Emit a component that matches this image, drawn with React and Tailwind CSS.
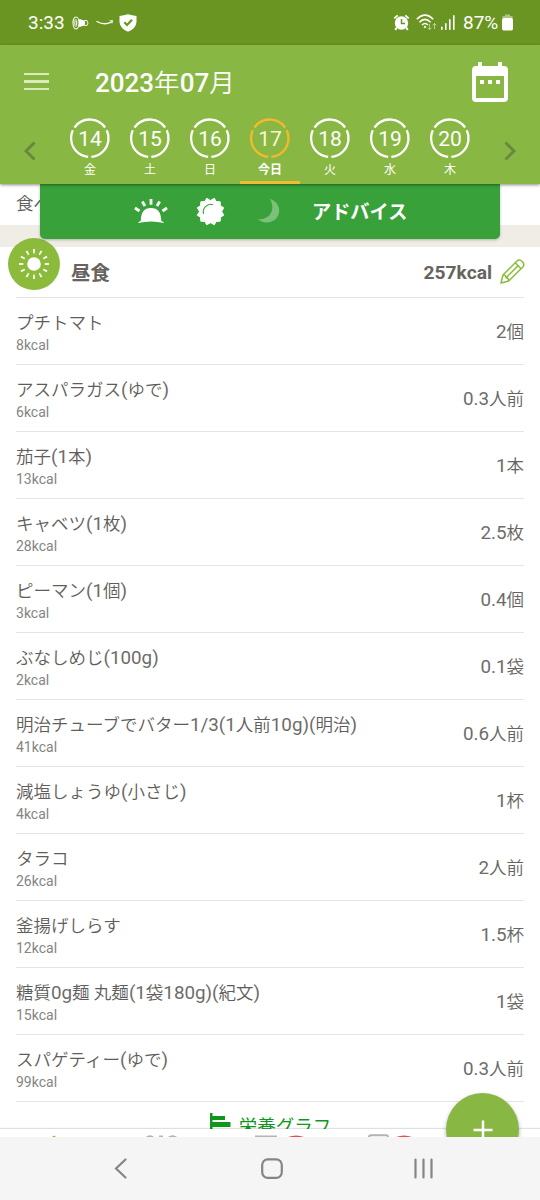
const DAYS = [
  { date: 14, day: '金' },
  { date: 15, day: '土' },
  { date: 16, day: '日' },
  { date: 17, day: '今日', today: true },
  { date: 18, day: '火' },
  { date: 19, day: '水' },
  { date: 20, day: '木' },
]

const FOODS = [
  { name: 'プチトマト', kcal: 8, amount: '2個' },
  { name: 'アスパラガス(ゆで)', kcal: 6, amount: '0.3人前' },
  { name: '茄子(1本)', kcal: 13, amount: '1本' },
  { name: 'キャベツ(1枚)', kcal: 28, amount: '2.5枚' },
  { name: 'ピーマン(1個)', kcal: 3, amount: '0.4個' },
  { name: 'ぶなしめじ(100g)', kcal: 2, amount: '0.1袋' },
  { name: '明治チューブでバター1/3(1人前10g)(明治)', kcal: 41, amount: '0.6人前' },
  { name: '減塩しょうゆ(小さじ)', kcal: 4, amount: '1杯' },
  { name: 'タラコ', kcal: 26, amount: '2人前' },
  { name: '釜揚げしらす', kcal: 12, amount: '1.5杯' },
  { name: '糖質0g麺 丸麺(1袋180g)(紀文)', kcal: 15, amount: '1袋' },
  { name: 'スパゲティー(ゆで)', kcal: 99, amount: '0.3人前' },
]

function StatusBar() {
  return (
    <div className="h-[45px] shrink-0 bg-[#6a9522] flex items-center pl-7 pr-[27px] text-white text-[19px] leading-none">
      <span className="w-[37px]">3:33</span>
      <svg className="ml-[7px]" width="18" height="14" viewBox="0 0 18 14" fill="none" stroke="white">
        <ellipse cx="4" cy="7" rx="3" ry="6" strokeWidth="1.1" />
        <ellipse cx="3.8" cy="7" rx="1" ry="3.5" strokeWidth="1" />
        <path d="M7.5 3.5L12 5V9L7.5 10.5z" fill="white" strokeWidth="1" />
        <path d="M12.5 4.5H15Q17 7 15 9.5H12.5z" strokeWidth="0.9" />
      </svg>
      <svg className="ml-[6px]" width="18" height="8" viewBox="0 0 18 8" fill="none" stroke="white" strokeLinecap="round">
        <path d="M1 2.5Q8 6.8 15.5 3" strokeWidth="1.4" />
        <path d="M14 1.8L16.5 1.5L16 4" strokeWidth="0.9" />
      </svg>
      <svg className="ml-[5px]" width="18" height="18" viewBox="0 0 18 18">
        <path d="M0.5 2Q5 1.5 9 0.3Q13 1.5 17.5 2V8Q17 14.5 9 17.8Q1 14.5 0.5 8z" fill="white" />
        <path d="M5.3 8.3L8 11L13 5.7" fill="none" stroke="#6a9522" strokeWidth="2.2" />
      </svg>

      <svg className="ml-auto" width="17" height="17" viewBox="0 0 17 17">
        <circle cx="8.5" cy="9" r="6.7" fill="white" />
        <path d="M1.3 4.4L4.7 1.4M15.7 4.4L12.3 1.4M3.7 13.5L2.3 16M13.3 13.5L14.7 16" stroke="white" strokeWidth="1.9" />
        <path d="M8.5 5V9.5H12" fill="none" stroke="#6a9522" strokeWidth="1.5" />
      </svg>
      <svg className="ml-[6px]" width="21" height="17" viewBox="0 0 21 17" fill="none" stroke="white" strokeWidth="1.6">
        <path d="M0.8 5.3Q9 -3 17.2 5.3M3.4 8.2Q9 2.5 14.6 8.2M6 11Q9 8 12 11" />
        <circle cx="9" cy="13" r="0.8" fill="white" strokeWidth="0.8" />
        <path d="M13.6 10V15.5M11.8 13.8L13.6 15.6L15.4 13.8M18.5 15V9.5M16.7 11.3L18.5 9.5L20.3 11.3" strokeWidth="1" opacity="0.55" />
      </svg>
      <svg className="ml-[4px]" width="14" height="15" viewBox="0 0 14 15" fill="white">
        <rect x="0" y="11.5" width="1.6" height="3.5" rx="0.8" />
        <rect x="4" y="8" width="1.6" height="7" rx="0.8" />
        <rect x="8" y="4" width="1.6" height="11" rx="0.8" />
        <rect x="12" y="0" width="1.6" height="15" rx="0.8" />
      </svg>
      <span className="ml-[8px] w-[37px]">87%</span>
      <svg className="ml-[2px]" width="11" height="17" viewBox="0 0 11 17">
        <path d="M3 0.5H8V2H9.5Q11 2 11 4H0Q0 2 1.5 2H3z" fill="white" opacity="0.45" />
        <rect y="4" width="11" height="12.5" rx="1.7" fill="white" />
      </svg>
    </div>
  )
}

function DayRing({ date, today }) {
  return (
    <div className="grid place-items-center">
      <svg className="col-start-1 row-start-1" width="42" height="42" viewBox="0 0 42 42" fill="none">
        <circle
          cx="20.8"
          cy="21.2"
          r="18.7"
          stroke={today ? '#f6b92c' : 'white'}
          strokeWidth="2.3"
          pathLength="360"
          strokeDasharray="110 10"
          transform="rotate(95 20.8 21.2)"
        />
      </svg>
      <span className={`col-start-1 row-start-1 pt-[2px] text-[21px] leading-none ${today ? 'text-[#fff3d2]' : 'text-white'}`}>{date}</span>
    </div>
  )
}

function Header() {
  return (
    <header className="relative z-20 h-[139px] shrink-0 bg-[#89b743] text-white shadow-[0_1px_3px_rgba(0,0,0,0.45)]">
      <div className="h-[72px] flex items-center pl-6 pr-[32px] pt-px">
        <div className="w-[25px] flex flex-col gap-[5px]">
          <div className="h-[2.5px] bg-[#dcebbd]" />
          <div className="h-[2.5px] bg-[#dcebbd]" />
          <div className="h-[2.5px] bg-[#dcebbd]" />
        </div>
        <h1 className="ml-[46px] pt-[4px] text-[26px] leading-none font-medium whitespace-nowrap">
          2023<span className="text-[25.5px] font-[350]">年</span>07<span className="text-[25.5px] font-[350]">月</span>
        </h1>
        <svg className="ml-auto" width="36" height="40" viewBox="0 0 36 40">
          <path
            fillRule="evenodd"
            fill="white"
            d="M6 0H10V4H26V0H30V4H32Q36 4 36 8V36Q36 40 32 40H4Q0 40 0 36V8Q0 4 4 4H6zM4 14V36H32V14z"
          />
          <path d="M8 18h4v4H8zM16 18h4v4h-4zM24 18h4v4h-4z" fill="white" />
        </svg>
      </div>
      <div className="h-[67px] flex">
        <div className="w-[60px] flex justify-center pt-[24px]">
          <svg width="12" height="20" viewBox="0 0 12 20" fill="none">
            <path d="M10.5 1.5L2 10L10.5 18.5" stroke="#6b863f" strokeWidth="3" />
          </svg>
        </div>
        {DAYS.map(d => (
          <div key={d.date} className={`w-[60px] h-full flex flex-col items-center border-b-3 ${d.today ? 'border-[#f0bd32]' : 'border-transparent'}`}>
            <DayRing date={d.date} today={d.today} />
            <span className={`mt-[5px] text-[12px] leading-[12px] ${d.today ? 'font-bold' : ''}`}>{d.day}</span>
          </div>
        ))}
        <div className="w-[60px] flex justify-center pt-[24px]">
          <svg width="12" height="20" viewBox="0 0 12 20" fill="none">
            <path d="M1.5 1.5L10 10L1.5 18.5" stroke="#6b863f" strokeWidth="3" />
          </svg>
        </div>
      </div>
    </header>
  )
}

function Advice() {
  return (
    <div className="absolute z-10 left-10 top-0 w-[460px] h-[55px] rounded-b-[5px] bg-[#38a139] shadow-[0_1px_3px_rgba(0,0,0,0.25)] flex items-center pl-[94px] text-white">
      <svg className="-mt-px" width="34" height="26" viewBox="0 0 34 26">
        <path d="M6.8 23Q6.8 10 17 10Q27.2 10 27.2 23Q29.5 23.7 30 25Q17 22 4 25Q4.5 23.7 6.8 23z" fill="white" />
        <path d="M17 1V6.8M8.3 3.5L11 8M25.7 3.5L23 8M1 10L5.5 13M33 10L28.5 13" stroke="white" strokeWidth="2.8" />
      </svg>
      <svg className="ml-[28px]" width="29" height="29" viewBox="0 0 29 29">
        <path
          fill="white"
          stroke="white"
          strokeWidth="1"
          strokeLinejoin="round"
          d="M14.5 3.5L18.3 1.3L20.2 4.6L24.2 4.8L24.4 8.8L27.7 10.7L25.7 14.5L27.7 18.3L24.4 20.2L24.2 24.2L20.2 24.4L18.3 27.7L14.5 25.7L10.7 27.7L8.8 24.4L4.8 24.2L4.6 20.2L1.3 18.3L3.5 14.5L1.3 10.7L4.6 8.8L4.8 4.8L8.8 4.6L10.7 1.3z"
        />
        <path d="M7.5 17C6 11 12 6 17 7.7" fill="none" stroke="#38a139" strokeWidth="1.1" />
      </svg>
      <svg className="ml-[31px] -mt-[2px]" width="25" height="26" viewBox="0 0 25 26">
        <path d="M14 1C27 5 26 22.5 12.5 24.3Q6 25 1.8 21Q9 22 13.8 17Q19 10 14 1z" fill="#7bc17a" />
      </svg>
      <span className="ml-[31px] pt-[2px] text-[19.2px] leading-none font-bold">アドバイス</span>
    </div>
  )
}

function MealHeader() {
  return (
    <div className="relative h-[51px] flex items-center mx-4 border-b border-[#e4e4e4] text-[#666361]">
      <div className="absolute -left-2 -top-[9px] size-[52px] rounded-full bg-[#8cba3b] grid place-items-center">
        <svg width="32" height="32" viewBox="0 0 32 32">
          <circle cx="16" cy="16" r="6.8" fill="white" />
          <circle cx="16" cy="16" r="12.8" fill="none" stroke="white" strokeWidth="4.4" pathLength="120" strokeDasharray="2.6 7.4" strokeDashoffset="1.3" />
        </svg>
      </div>
      <h2 className="ml-[55px] pt-[3px] text-[19.5px] leading-none font-bold">昼食</h2>
      <span className="ml-auto pt-px text-[19.2px] leading-none font-bold">257kcal</span>
      <svg className="ml-[8px] -mr-px -mt-[2px]" width="25" height="25" viewBox="0 0 25 25" fill="none" stroke="#8cba3b" strokeWidth="1.5" strokeLinejoin="round">
        <path d="M1 24L3 16L17 2Q19.5 -0.2 22.3 2.5Q25 5.5 22.8 8L8.7 22z" />
        <path d="M3 16Q6 15.5 6 18.8Q8.7 18.8 8.7 22M15.3 3.7L21 9.7M6 18.8L18.3 6.5" />
      </svg>
    </div>
  )
}

// Latin letters and digits are set a little larger than the kana and kanji around them.
function MixedText({ children }) {
  return children.split(/([\x21-\x7e]+)/).map((part, i) =>
    i % 2 ? (
      <span key={i} className="text-[18.8px] font-normal text-[#6e6c6a]">{part}</span>
    ) : (
      part
    )
  )
}

function FoodRow({ name, kcal, amount }) {
  return (
    <li className="h-[67px] mx-4 flex items-center justify-between border-b border-[#e4e4e4]">
      <div className="pt-[2px]">
        <p className="h-[26px] text-[17.5px] leading-[26px] font-[350] text-[#5f5d5b] whitespace-nowrap">
          <MixedText>{name}</MixedText>
        </p>
        <p className="h-[18px] text-[14px] leading-[18px] text-[#858483]">{kcal}kcal</p>
      </div>
      <span className="h-[22px] pt-[2px] text-[17.5px] leading-[20px] font-[350] text-[#666462]">
        <MixedText>{amount}</MixedText>
      </span>
    </li>
  )
}

// The tab icons peek out just above the system navigation.
function TabBar() {
  return (
    <div className="relative z-10 h-[8px] shrink-0 bg-white shadow-[0_-1px_1px_rgba(0,0,0,0.12)] overflow-hidden">
      <svg width="540" height="8" viewBox="0 0 540 8" fill="none">
        <path d="M52 8L54 6.5L56 8z" fill="#8cba3b" />
        <path d="M146 9Q150 5.5 154 9M159 7.5H163M168 9Q172.5 5.5 177 9M255 7.5H277" stroke="#b3b3b3" strokeWidth="1.8" />
        <path d="M369 10V8Q369 6.3 371 6.3H386Q388 6.3 388 8V10" stroke="#b3b3b3" strokeWidth="2" />
        <path d="M288 8Q296 5 304 8zM396 8Q404 5 412 8z" fill="#e05050" />
      </svg>
    </div>
  )
}

function SystemNav() {
  return (
    <nav className="relative z-30 h-[63px] shrink-0 bg-[#f5f5f5]">
      <svg width="540" height="63" viewBox="0 0 540 63" fill="none" stroke="#858585" strokeWidth="2.2" strokeLinecap="round">
        <path d="M125.5 22.5L116 31.5L125.5 40.5" />
        <rect x="262.2" y="22.4" width="19.6" height="18.4" rx="5.5" />
        <path d="M415.5 22.5V40.5M423.5 22.5V40.5M431.5 22.5V40.5" />
      </svg>
    </nav>
  )
}

export default function App() {
  return (
    <div className="relative w-[540px] h-[1200px] overflow-hidden flex flex-col bg-white font-['Roboto','Noto_Sans_CJK_JP',sans-serif]" lang="ja">
      <StatusBar />
      <Header />
      <main className="relative h-[945px] shrink-0 bg-white overflow-hidden">
        <Advice />
        <div className="h-[41px] px-4 pt-[10px] text-[17.5px] leading-[20px] font-[350] text-[#5f5d5b]">食べたもの</div>
        <div className="h-[22px] bg-[#efede5]" />
        <MealHeader />
        <ul>
          {FOODS.map(f => (
            <FoodRow key={f.name} {...f} />
          ))}
        </ul>
        <div className="flex items-start justify-center gap-[8px] pt-[11px] pl-px text-[#0d981c]">
          <svg width="21" height="20" viewBox="0 0 21 20" fill="currentColor">
            <path d="M0 0H2.5V3H15V7H2.5V9H20.5V14H2.5V20H0z" />
          </svg>
          <span className="text-[18.5px] leading-[28px]">栄養グラフ</span>
        </div>
      </main>
      <TabBar />
      <button className="absolute z-20 left-[446px] top-[1093px] size-[73px] rounded-full bg-[#89b743] shadow-[0_2px_4px_rgba(0,0,0,0.3)] grid place-items-center" aria-label="追加">
        <svg width="20" height="20" viewBox="0 0 20 20">
          <path d="M10 0.5V19.5M0.5 10H19.5" stroke="white" strokeWidth="2.5" />
        </svg>
      </button>
      <SystemNav />
    </div>
  )
}
